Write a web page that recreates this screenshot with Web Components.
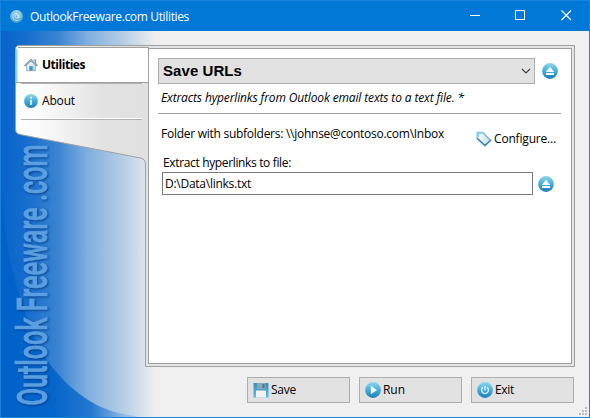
<!DOCTYPE html>
<html lang="en"><head><meta charset="utf-8"><title>OutlookFreeware.com Utilities</title>
<style>html,body{margin:0;width:590px;height:418px;overflow:hidden;font:12px "Open Sans","Noto Sans",sans-serif;color:#000}</style></head>
<body><utility-window></utility-window>
<script>
const define=(name,html,setup)=>customElements.define(name,class extends HTMLElement{
  connectedCallback(){
    if(this.shadowRoot)return;
    this.attachShadow({mode:'open'}).innerHTML=html;
    if(setup)setup(this);
  }
});

// One line of text whose tracking is tuned to occupy the width given in "w".
define('fit-text','<style>:host{display:inline-block;white-space:pre;line-height:16px}</style><span><slot></slot></span>',el=>{
  const span=el.shadowRoot.querySelector('span'),n=el.textContent.length;
  const w=span.getBoundingClientRect().width;
  span.style.letterSpacing=((+el.getAttribute('w')-w)/n)+'px';
  el.style.width=el.getAttribute('w')+'px';
});

const ball='<defs><linearGradient id="b" x2="0" y2="1"><stop stop-color="#8fd6ec"/><stop offset=".5" stop-color="#45aedb"/><stop offset="1" stop-color="#1d7db8"/></linearGradient></defs><circle cx="8" cy="8" r="7.9" fill="url(#b)"/>';
const icons={
  home:'<defs><linearGradient id="h" x2="1" y2="1"><stop stop-color="#fff"/><stop offset="1" stop-color="#c9cdd2"/></linearGradient></defs><path d="M3 7.5V14.5H13V7.5L8 3Z" fill="url(#h)" stroke="#8e979f" stroke-width=".8"/><path d="M11 2.5h2.2v4" fill="none" stroke="#8598a5" stroke-width="1.4"/><path d="M.8 9 8 2.2 15.2 9" fill="none" stroke="#5d8299" stroke-width="2"/><path d="M1.2 8.5 8 2.1 14.8 8.5" fill="none" stroke="#c5e0ee" stroke-width=".8"/><path d="M6 9.3h4v5H6z" fill="#2f9bda"/>',
  info:ball+'<circle cx="8" cy="4.2" r="1.2" fill="#e5f6fd"/><path d="M7 6.5h2v6H7z" fill="#e5f6fd"/>',
  eject:ball+'<path d="M8 3.8 12.3 9H3.7Z M4 10h8v2H4z" fill="#f4fafd"/>',
  run:ball+'<path d="M5.8 3.7 12 8l-6.2 4.3Z" fill="#f4fafd"/>',
  power:ball+'<path d="M6 5.4A3.4 3.4 0 1 0 10 5.4M8 4v4.5" fill="none" stroke="#e8f6fc" stroke-width="1.3"/>',
  at:ball.replace('#8fd6ec','#a5d5e4').replace('#45aedb','#6bb8d6').replace('#1d7db8','#4a9cc4')+'<circle cx="8" cy="8" r="2" fill="none" stroke="#d9eff7"/><path d="M10.2 5.8v3.4c.2 1.4 2 1.2 2.2-.6A4.4 4.4 0 1 0 10.7 12" fill="none" stroke="#d9eff7"/>',
  save:'<defs><linearGradient id="s" x2="0" y2="1"><stop stop-color="#3b8fb9"/><stop offset="1" stop-color="#54bde9"/></linearGradient></defs><path d="M.5 1H15.5V15.5H.5Z" fill="url(#s)"/><path d="M4 1h8.5v6H4z" fill="#8ba5b3"/><path d="M9.5 2h2v4h-2z" fill="#377b9d"/><path d="M3 8.8h10V15.5H3z" fill="#f2f2f2"/><path d="M3 8.5h10" stroke="#a4c4d2"/>',
  tag:'<defs><linearGradient id="t" x2="1"><stop stop-color="#f8fcff"/><stop offset="1" stop-color="#cdd7dc"/></linearGradient></defs><path d="M1.2 1.3 6.5 1.3 14.6 9.2 9 14.4 1.2 7Z" fill="url(#t)" stroke="#5fb8e0" stroke-width="1.3"/><path d="M1 7.5 9 14.6 15 9" fill="none" stroke="#3387b3" stroke-width="1.3"/><path d="M1 1h6.5L1 7.3z" fill="#7fcdf0"/><circle cx="4" cy="4" r="1.1" fill="#fff"/>'
};
define('glyph-icon','<style>:host{display:block;width:16px;height:16px;flex:none}svg{display:block;width:100%;height:100%}</style><svg viewBox="0 0 16 16"></svg>',el=>{
  el.shadowRoot.querySelector('svg').innerHTML=icons[el.getAttribute('name')];
});

define('title-bar',`<style>:host{display:flex;height:31px;box-sizing:border-box;background:#0078d7;color:#fff;align-items:center;padding:0 0 0 9px;border-top:1px solid #1883d7}
glyph-icon{width:13px;height:13px;margin-right:7px}fit-text{margin-top:1px}.controls{display:grid;grid-template-columns:46px 46px 46px;margin-left:auto;height:30px}svg{width:46px;height:30px;fill:none;stroke:#fff}</style>
<glyph-icon name="at"></glyph-icon><fit-text w="159">OutlookFreeware.com Utilities</fit-text>
<div class="controls"><svg><path d="M19 14.5h10"/></svg><svg><path d="M18.500 9.500h9v9h-9z"/></svg><svg><path d="M18.500 9.500l9.500 9.500M28 9.500 18.500 19" stroke-width="1.2"/></svg></div>`);

define('side-art',`<style>:host{display:block;position:absolute;left:0;top:0;z-index:-1}svg{display:block}text{font:500 42.5px Roboto,"Liberation Sans Narrow",sans-serif;fill:#5b9fe1;stroke:#5b9fe1;stroke-width:.9}.shade{filter:drop-shadow(1.5px 1.5px 1px rgba(5,55,130,.8))}</style>
<svg width="160" height="386" viewBox="0 31 160 386"><defs>
<linearGradient id="g" gradientUnits="userSpaceOnUse" x1="0" x2="155"><stop stop-color="#0764c9"/><stop offset=".16" stop-color="#156dcd"/><stop offset=".37" stop-color="#3b84d2"/><stop offset=".56" stop-color="#80afdf"/><stop offset=".77" stop-color="#b2cbe5"/><stop offset=".94" stop-color="#dfe6ed"/><stop offset="1" stop-color="#efefef"/></linearGradient>
<linearGradient id="d" gradientUnits="userSpaceOnUse" x1="0" x2="150"><stop stop-color="#0061c9"/><stop offset=".35" stop-color="#0565ca"/><stop offset=".6" stop-color="#2478d0"/><stop offset="1" stop-color="#e6ebf0"/></linearGradient></defs>
<path d="M0 31H160V417H0Z" fill="url(#g)"/><path d="M0 190C4 235 8 258 14 280C23 312 34 343 47 362C61 380 74 393 94 404C107 411 119 414 136 416V417H0Z" fill="url(#d)"/>
<g class="shade"><text>Outlook Freeware .com</text></g></svg>`,el=>{
  const text=el.shadowRoot.querySelector('text');
  text.setAttribute('transform','translate(46 405.5) rotate(-90) scale('+261/text.getComputedTextLength()+' 1)');
});

define('nav-item',`<style>:host{display:flex;align-items:center;box-sizing:border-box;padding-left:9px;gap:4px}:host([selected]){font-weight:700}glyph-icon{width:14px;height:14px}</style><glyph-icon></glyph-icon><slot></slot>`,el=>{
  const old=el.shadowRoot.querySelector('glyph-icon'),icon=document.createElement('glyph-icon');
  icon.setAttribute('name',el.getAttribute('icon'));old.replaceWith(icon);
});

define('side-nav',`<style>:host{display:block;position:relative;width:134px;height:318px;z-index:1}svg{position:absolute;inset:0;z-index:-1}nav{display:flex;flex-direction:column;padding-top:3px}.a{height:34px}.b{height:38px}</style>
<svg width="134" height="318"><defs><linearGradient id="g"><stop stop-color="#fff"/><stop offset=".2" stop-color="#fafafa"/><stop offset=".65" stop-color="#e2e2e2"/><stop offset="1" stop-color="#e0e0e0"/></linearGradient></defs>
<path d="M.5 4Q.5 .5 5 .5H134V130H130.5V119Q130.500 114 125.500 113L5 89.500Q.5 88.500 .5 84Z" fill="url(#g)"/><path d="M134 .5H5Q.5 .5 .5 4V84Q.5 88.500 5 89.500L125.500 113Q130.500 114 130.500 119V318" fill="none" stroke="#a0a0a0"/><path d="M133.500 2V318" stroke="#a0a0a0"/><path d="M1 37.500V6Q1 2.500 5 2.500H133.500V37.500Z" fill="#fff"/><path d="M3 2.500H133.500V37.500H1" fill="none" stroke="#a0a0a0"/><path d="M1.500 4V37" stroke="#8fd2f2" stroke-width="2"/><path d="M6 38.500H127M6 74.500H127" stroke="#b0b0b0"/><path d="M6 73.500H127" stroke="#fff"/></svg>
<nav><nav-item class="a" icon="home" selected><fit-text w="43">Utilities</fit-text></nav-item><nav-item class="b" icon="info"><fit-text w="33">About</fit-text></nav-item></nav>`);

define('tool-panel',`<style>:host{display:block;box-sizing:border-box;width:430px;height:322px;border:1px solid #a0a0a0;padding:2px;background:#e3e3e3;margin-left:-4px}
main{height:316px;box-sizing:border-box;border:1px solid #a0a0a0;background:#fff;padding:9px 10px 0 9px}
.row{display:flex;align-items:center}.pick{height:26px;gap:7px}.select{display:flex;align-items:center;justify-content:space-between;box-sizing:border-box;width:377px;height:26px;background:#e1e1e1;border:1px solid #adadad;padding:0 2px 0 4px;font:bold 15px "Liberation Sans",sans-serif}
.desc{font-style:italic;height:30px;padding:5px 0 0 3px;box-sizing:border-box;border-bottom:1px solid #a0a0a0}
.info{height:41px;justify-content:space-between;align-items:flex-start;padding:12px 5px 0 3px;box-sizing:border-box}.conf{display:flex;gap:2px;padding-top:5px}
.label{padding:0 0 1px 5px;display:flex}.file{gap:5px;padding-left:4px}.input{box-sizing:border-box;width:371px;height:23px;border:1px solid #7a7a7a;padding:2px 2px;}</style>
<main><div class="row pick"><div class="select"><fit-text w="79">Save URLs</fit-text><svg width="12" height="12"><path d="M2 4 6 8 10 4" fill="none" stroke="#444" stroke-width="1.2"/></svg></div><glyph-icon name="eject"></glyph-icon></div>
<div class="desc"><fit-text w="303">Extracts hyperlinks from Outlook email texts to a text file. *</fit-text></div>
<div class="row info"><fit-text w="283">Folder with subfolders: \\\\johnse@contoso.com\\Inbox</fit-text><div class="conf"><glyph-icon name="tag"></glyph-icon><fit-text w="62">Configure...</fit-text></div></div>
<div class="label"><fit-text w="128">Extract hyperlinks to file:</fit-text></div>
<div class="row file"><div class="input"><fit-text w="86">D:\\Data\\links.txt</fit-text></div><glyph-icon name="eject"></glyph-icon></div></main>`);

define('push-button',`<style>:host{display:flex;align-items:center;box-sizing:border-box;width:103px;height:26px;background:#e1e1e1;border:1px solid #adadad;padding-left:5px;gap:2px}</style><slot></slot>`);

define('utility-window',`<style>:host{display:flex;flex-direction:column;width:590px;height:418px;background:#f0f0f0;position:relative;box-shadow:inset 0 0 0 1px #1883d7}
title-bar{margin:0 1px}.body{position:relative;z-index:0;height:386px;margin:0 1px;background:#f0f0f0;overflow:hidden}.main{display:flex;padding:14px 0 0 14px}
footer{display:flex;gap:9px;padding:10px 0 0 246px}.grip{position:absolute;right:2px;bottom:2px}</style>
<title-bar></title-bar><div class="body"><side-art></side-art><div class="main"><side-nav></side-nav><tool-panel></tool-panel></div>
<footer><push-button><glyph-icon name="save"></glyph-icon><fit-text w="25">Save</fit-text></push-button><push-button><glyph-icon name="run"></glyph-icon><fit-text w="22">Run</fit-text></push-button><push-button><glyph-icon name="power"></glyph-icon><fit-text w="19">Exit</fit-text></push-button></footer>
<svg class="grip" width="8" height="8" fill="#bcbcbc"><path d="M0 6h2v2H0zM3 6h2v2H3zM6 6h2v2H6zM3 3h2v2H3zM6 3h2v2H6zM6 0h2v2H6z"/></svg></div>`);
</script></body></html>
